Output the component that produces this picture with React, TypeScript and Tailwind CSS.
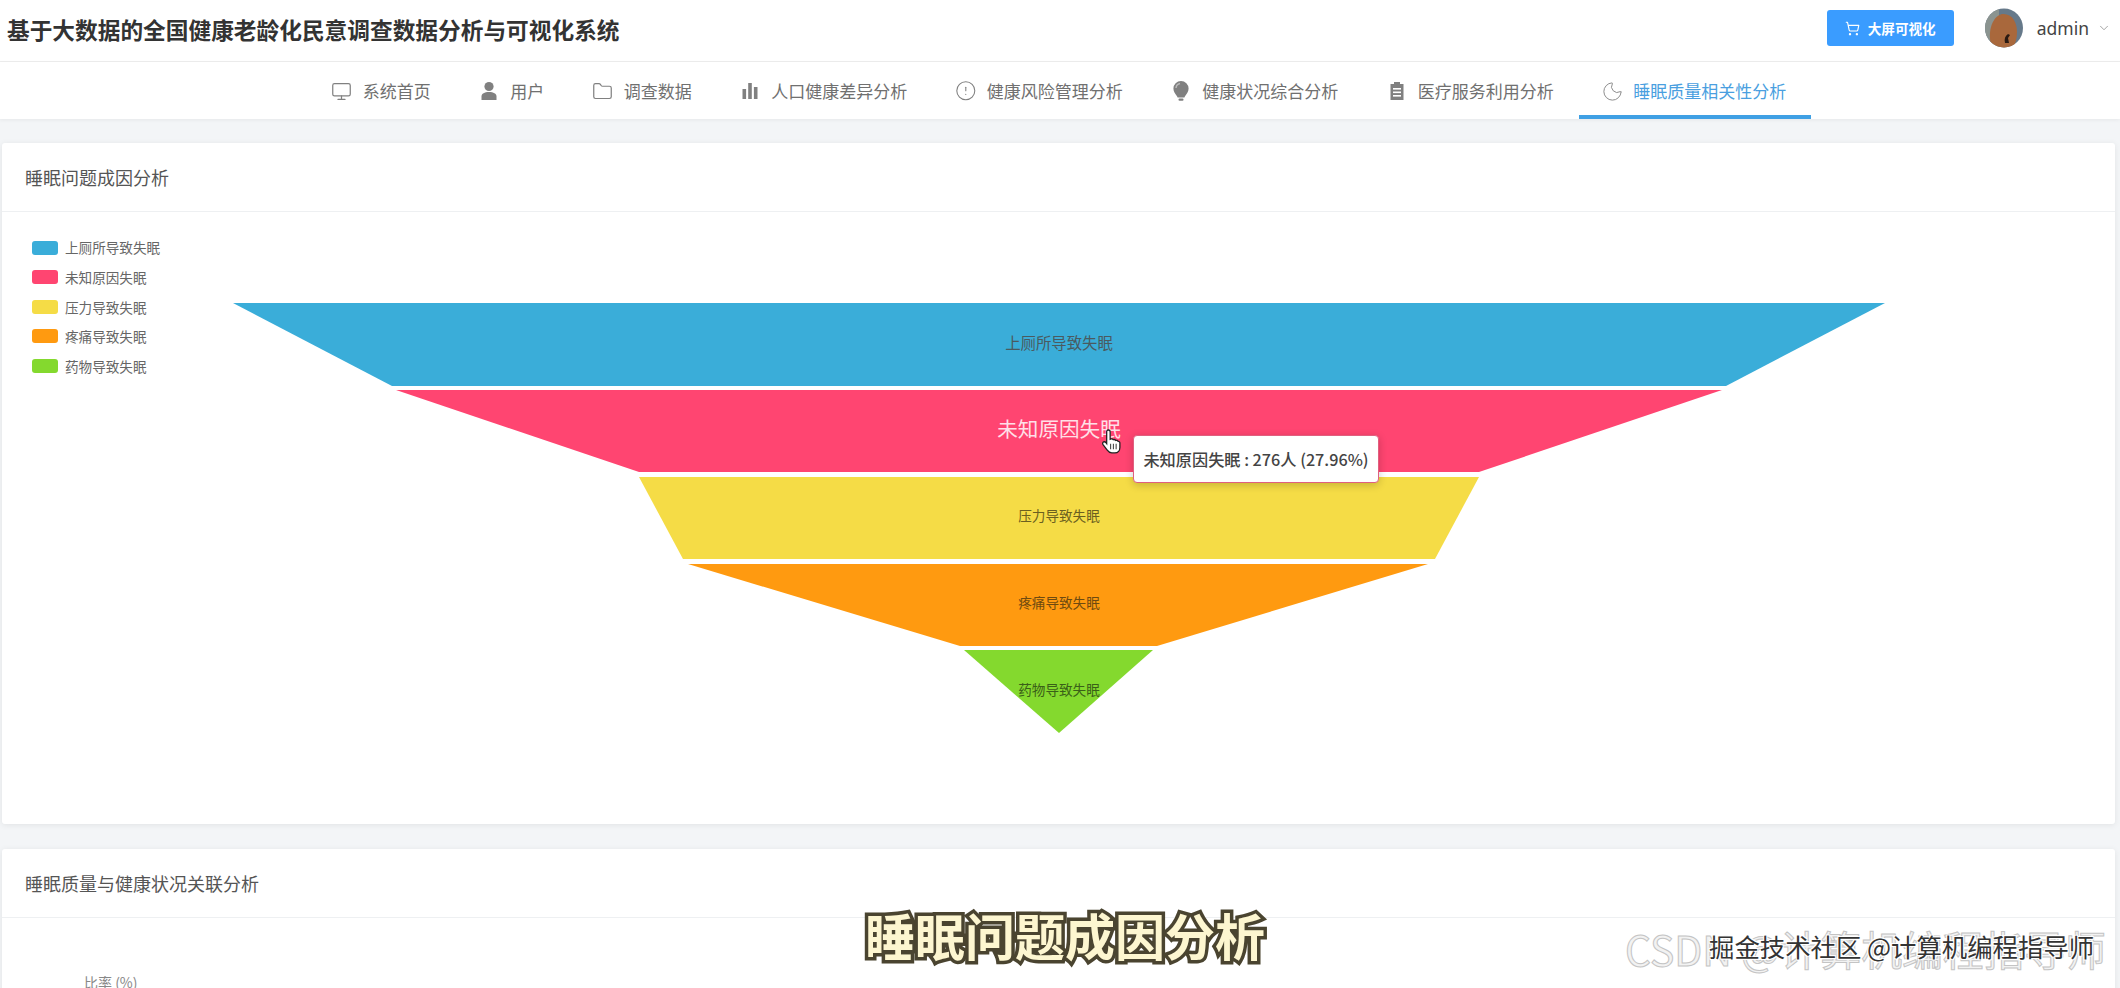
import { ChevronDown, Folder, Info, Moon, Monitor, ShoppingCart } from "lucide-react";

const cjk = "font-['Noto_Sans_CJK_SC','Noto_Sans',sans-serif]";

const UserIcon = () => (
  <svg viewBox="0 0 18 20" className="w-[18px] h-[20px]" fill="currentColor">
    <circle cx="9" cy="5.5" r="4.6" />
    <path d="M1.5 19v-3.5C1.5 12.5 4.5 11 9 11s7.5 1.5 7.5 4.5V19z" />
  </svg>
);

const BarsIcon = () => (
  <svg viewBox="0 0 18 20" className="w-[18px] h-[20px]" fill="currentColor">
    <rect x="1.5" y="8" width="3.6" height="10" />
    <rect x="7.2" y="2" width="3.6" height="16" />
    <rect x="12.9" y="6" width="3.6" height="12" />
  </svg>
);

const BulbIcon = () => (
  <svg viewBox="0 0 18 22" className="w-[18px] h-[22px]">
    <path
      d="M9 1a7.6 7.6 0 0 0-7.6 7.6c0 3.4 2 5.2 3.6 7.6l.6 1.4h6.800l.6-1.400c1.600-2.400 3.600-4.200 3.600-7.600A7.600 7.600 0 0 0 9 1z"
      fill="currentColor"
    />
    <path d="M4 8a5 5 0 0 1 4-4.500" stroke="#bbb" strokeWidth="1.400" fill="none" />
    <rect x="6.500" y="18.600" width="5" height="2.200" rx="1" fill="currentColor" />
  </svg>
);

const ClipboardIcon = () => (
  <svg viewBox="0 0 18 20" className="w-[18px] h-[20px]" fill="currentColor">
    <path d="M6 1h6v2h3.500v16h-13V3H6z" />
    <rect x="5" y="7" width="8" height="1.600" fill="#fff" />
    <rect x="5" y="10.500" width="8" height="1.600" fill="#fff" />
    <rect x="5" y="14" width="8" height="1.600" fill="#fff" />
  </svg>
);

const navItems = [
  { label: "系统首页", icon: <Monitor className="w-[21px] h-[21px] -mx-[1.500px]" strokeWidth={1.4} /> },
  { label: "用户", icon: <UserIcon /> },
  { label: "调查数据", icon: <Folder className="w-[21px] h-[21px] -mx-[1.500px]" strokeWidth={1.4} /> },
  { label: "人口健康差异分析", icon: <BarsIcon /> },
  { label: "健康风险管理分析", icon: <Info className="w-[21.600px] h-[21.600px] -mx-[1.800px] rotate-180" strokeWidth={1.2} /> },
  { label: "健康状况综合分析", icon: <BulbIcon /> },
  { label: "医疗服务利用分析", icon: <ClipboardIcon /> },
  { label: "睡眠质量相关性分析", icon: <Moon className="w-[23px] h-[23px] -mx-[2.500px]" strokeWidth={1} />, active: true },
];

const legend = [
  { label: "上厕所导致失眠", color: "bg-[#3aadd9]" },
  { label: "未知原因失眠", color: "bg-[#ff4571]" },
  { label: "压力导致失眠", color: "bg-[#f5dc46]" },
  { label: "疼痛导致失眠", color: "bg-[#ff9a10]" },
  { label: "药物导致失眠", color: "bg-[#84d92e]" },
];

const Funnel = () => (
  <svg viewBox="2 212 2113 612" className="absolute inset-0 w-full h-full">
    <polygon points="233,303 1885,303 1726,386 392,386" fill="#3aadd9" />
    <polygon points="396,390 1722,390 1479,472 639,472" fill="#ff4571" />
    <polygon points="639,477 1479,477 1435,559 683,559" fill="#f5dc46" />
    <polygon points="688,564 1428,564 1157,646 960,646" fill="#ff9a10" />
    <polygon points="964,650 1153,650 1059,733" fill="#84d92e" />
    <g fontFamily="'Noto Sans CJK SC', sans-serif" textAnchor="middle" dominantBaseline="central">
      <text x="1059" y="342" fontSize="15.400" fill="#4a5a60">上厕所导致失眠</text>
      <text x="1059" y="428" fontSize="20.600" fill="#ffe0e8">未知原因失眠</text>
      <text x="1059" y="515" fontSize="13.600" fill="#6b5f20">压力导致失眠</text>
      <text x="1059" y="602" fontSize="13.600" fill="#6e4a10">疼痛导致失眠</text>
      <text x="1059" y="689" fontSize="13.600" fill="#3a6018">药物导致失眠</text>
    </g>
  </svg>
);

const Card = ({ title, children }: { title: string; children: React.ReactNode }) => (
  <section className="bg-white rounded-[3px] shadow-[0_1px_6px_rgba(0,0,0,0.08)]">
    <div className="h-[69px] flex items-center pl-[23px] border-b border-[#eef0f2] text-[18px] text-[#555]">
      {title}
    </div>
    {children}
  </section>
);

export default function App() {
  return (
    <div className={`relative w-[2120px] h-[988px] overflow-hidden bg-[#f3f5f7] ${cjk}`}>
      <header className="h-[62px] bg-white border-b border-[#eeeeee] flex items-center pl-[7px] pr-[9px] pb-[5px]">
        <h1 className="text-[22.700px] font-bold text-[#333] mt-[4px]">基于大数据的全国健康老龄化民意调查数据分析与可视化系统</h1>
        <button className="ml-auto w-[127px] h-[36px] rounded-[3px] bg-[#3a9cff] text-white text-[13.600px] font-bold flex items-center justify-center gap-[8px]">
          <ShoppingCart className="w-[15px] h-[15px]" strokeWidth={1.8} />
          大屏可视化
        </button>
        <svg viewBox="0 0 38 40" className="w-[38px] h-[40px] ml-[31px]">
          <defs>
            <clipPath id="av"><ellipse cx="19" cy="20" rx="19" ry="19.500" /></clipPath>
          </defs>
          <g clipPath="url(#av)">
            <rect width="38" height="40" fill="#66798a" />
            <rect width="14" height="40" fill="#8b9490" />
            <path d="M7 40C2 26 6 9 17 6c10-1 15 8 15 18 0 7-2 12-4 16z" fill="#a9683c" />
            <path d="M20 35c-1-4 0-7 3-9l2 1-2 3 1 5z" fill="#2a1a12" />
          </g>
        </svg>
        <span className="ml-[14px] text-[17.500px] text-[#444] font-['Noto_Sans',sans-serif]">admin</span>
        <ChevronDown className="ml-[8px] w-[14px] h-[14px] text-[#888]" strokeWidth={1.3} />
      </header>
      <nav className="h-[57px] bg-white flex justify-center shadow-[0_1px_4px_rgba(0,0,0,0.06)] relative -ml-[1px]">
        {navItems.map((item) => (
          <div
            key={item.label}
            className={`flex items-center gap-[12px] px-[24.750px] text-[17px] border-b-[4px] pt-[5px] ${
              item.active ? "border-[#3fa0e4] text-[#4a9fe0]" : "border-transparent text-[#707070]"
            }`}
          >
            <span className={item.active ? "text-[#888]" : "text-[#808080]"}>{item.icon}</span>
            {item.label}
          </div>
        ))}
      </nav>
      <main className="flex flex-col gap-[25px] pt-[24px] pl-[2px] pr-[5px]">
        <Card title="睡眠问题成因分析">
          <div className="relative h-[612px]">
            <Funnel />
            <ul className="absolute left-[30px] top-[28.500px] flex flex-col gap-[15.600px]">
              {legend.map((l) => (
                <li key={l.label} className="flex items-center gap-[7px] h-[14px] text-[13.600px] text-[#666]">
                  <span className={`w-[26px] h-[14px] rounded-[3px] ${l.color}`} />
                  {l.label}
                </li>
              ))}
            </ul>
            <div className="absolute left-[1131px] top-[223px] w-[246px] h-[48px] bg-white border border-[#e0607f] rounded-[4px] shadow-[0_2px_8px_rgba(0,0,0,0.2)] flex items-center justify-center text-[16.200px] font-medium text-[#444] whitespace-nowrap">
              未知原因失眠 : 276人 (27.96%)
            </div>
            <svg viewBox="0 0 24 28" className="absolute left-[1099px] top-[215px] w-[22px] h-[28px]">
              <path
                d="M8 2c1.400 0 2 1 2 2.200v8l1-.4c1-.2 2 0 2.400.8 1-.4 2-.2 2.600.8 1-.4 2.200 0 2.600 1 1-.2 2 .4 2 1.800v5c0 3-2 5.800-5.400 5.800h-3.400c-2.400 0-3.600-1-5-3l-4.600-6c-.8-1.200-.4-2.400.6-3 1-.4 2 0 2.800 1l.6.800V4.200C6 3 6.800 2 8 2z"
                fill="#fff"
                stroke="#222"
                strokeWidth="1.400"
              />
              <path d="M10.500 17v6M13.500 17v6M16.500 17v6" stroke="#222" strokeWidth="1" />
            </svg>
          </div>
        </Card>
        <Card title="睡眠质量与健康状况关联分析">
          <div className="pt-[54px] pl-[82px] text-[14px] text-[#888]">比率 (%)</div>
        </Card>
      </main>
      <div className="absolute left-[865px] top-[899px] text-[50px] leading-[70px] font-bold text-[#fdf6d0] [-webkit-text-stroke:7px_#4a4430] [paint-order:stroke_fill]">
        睡眠问题成因分析
      </div>
      <div className="absolute left-[1625px] top-[921px] text-[40.800px] leading-[56px] text-[#f2f2f2] whitespace-nowrap [-webkit-text-stroke:1px_#c4c4c4]">
        CSDN @计算机编程指导师
      </div>
      <div className="absolute left-[1709px] top-[928px] text-[25.400px] leading-[36px] text-[#333] whitespace-nowrap [text-shadow:1px_1px_0_#fff,-1px_-1px_0_#fff,1px_-1px_0_#fff,-1px_1px_0_#fff]">
        掘金技术社区 @计算机编程指导师
      </div>
    </div>
  );
}
